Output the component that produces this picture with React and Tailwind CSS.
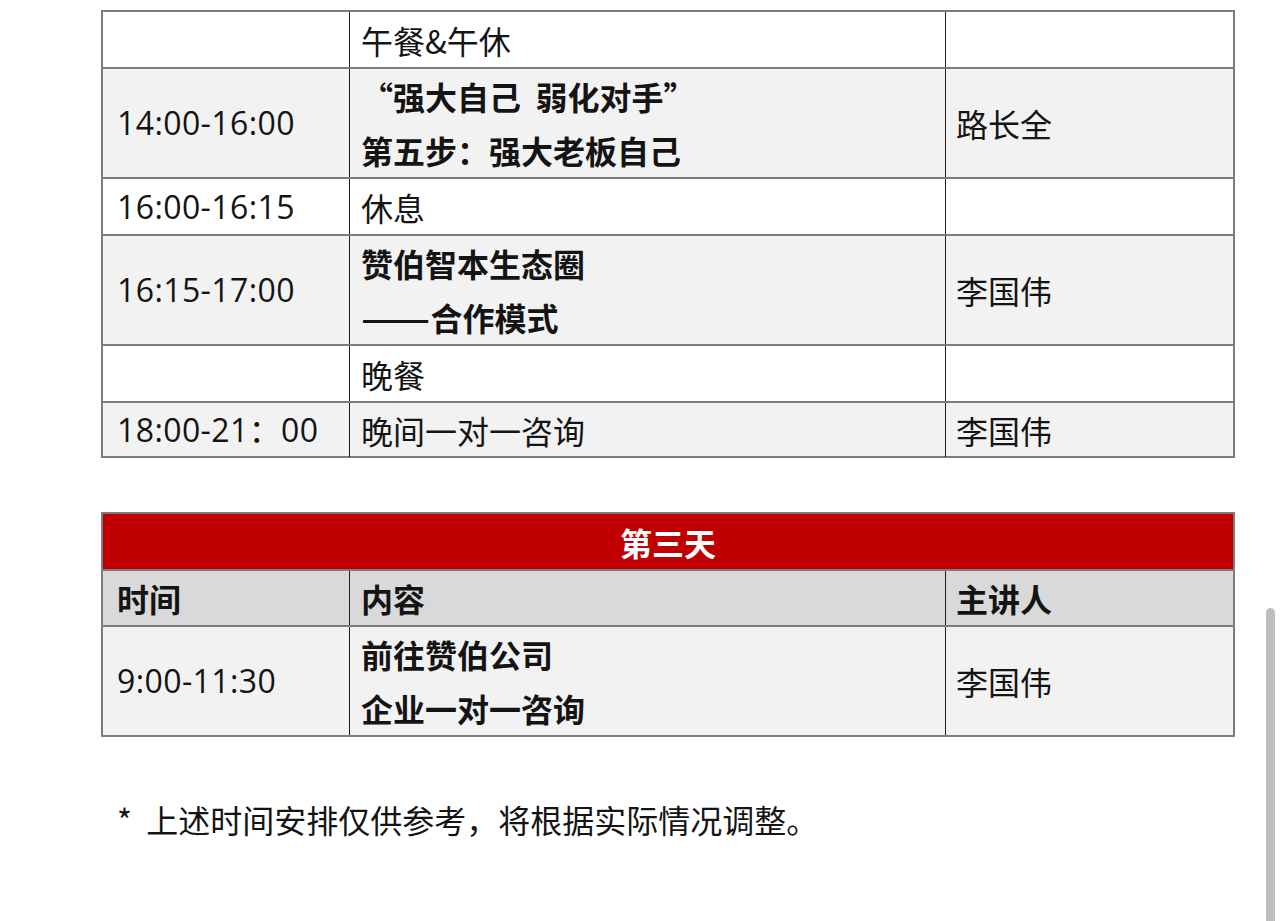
import React from "react";

const cjk = { fontFamily: '"Noto Sans CJK SC", "Noto Sans", sans-serif' };
const latin = { fontFamily: '"Open Sans", "Noto Sans CJK SC", sans-serif' };

function Row({ bg, time, content, speaker, bold, h, first }) {
  return (
    <div className={`grid grid-cols-[247px_596px_1fr] ${first ? "" : "border-t-2 border-[#7d7d7d]"} ${bg} ${h}`}>
      <div className="flex items-center pl-[14px] border-r border-[#1e1e1e] tracking-[0.4px]" style={latin}>
        {time}
      </div>
      <div className={`flex flex-col justify-center pl-[11px] border-r border-[#1e1e1e] ${bold ? "font-bold" : ""}`}>
        {content.map((c, i) => (
          <div key={i} className="leading-[54px] whitespace-pre">
            {c}
          </div>
        ))}
      </div>
      <div className="flex items-center pl-[10px]">{speaker}</div>
    </div>
  );
}

const dash = (
  <>
    <span className="inline-block origin-left scale-x-[1.27] mr-[15px]">——</span>合作模式
  </>
);

export default function App() {
  return (
    <div className="relative w-[1284px] h-[921px] bg-white overflow-hidden text-[32px] text-[#141414]" style={cjk}>
      <div className="pt-[10px] pl-[101px]">
        <div className="w-[1134px] border-2 border-[#7d7d7d]">
          <Row first h="h-[55px]" bg="bg-white" time="" content={["午餐&午休"]} speaker="" />
          <Row h="h-[110px]" bg="bg-[#f2f2f2]" time="14:00-16:00" content={["“强大自己  弱化对手”", "第五步：强大老板自己"]} speaker="路长全" bold />
          <Row h="h-[57px]" bg="bg-white" time="16:00-16:15" content={["休息"]} speaker="" />
          <Row h="h-[110px]" bg="bg-[#f2f2f2]" time="16:15-17:00" content={["赞伯智本生态圈", dash]} speaker="李国伟" bold />
          <Row h="h-[57px]" bg="bg-white" time="" content={["晚餐"]} speaker="" />
          <Row h="h-[55px]" bg="bg-[#f2f2f2]" time="18:00-21：00" content={["晚间一对一咨询"]} speaker="李国伟" />
        </div>

        <div className="mt-[54px] w-[1134px] border-2 border-[#7d7d7d]">
          <div className="h-[55px] bg-[#c00000] text-white font-bold flex items-center justify-center">第三天</div>
          <div className="grid grid-cols-[247px_596px_1fr] h-[56px] border-t-2 border-[#7d7d7d] bg-[#d9d9d9] font-bold">
            <div className="flex items-center pl-[14px] border-r border-[#1e1e1e]">时间</div>
            <div className="flex items-center pl-[11px] border-r border-[#1e1e1e]">内容</div>
            <div className="flex items-center pl-[10px]">主讲人</div>
          </div>
          <Row h="h-[110px]" bg="bg-[#f2f2f2]" time="9:00-11:30" content={["前往赞伯公司", "企业一对一咨询"]} speaker="李国伟" bold />
        </div>

        <div className="mt-[60px] pl-[16px] leading-[44px] whitespace-pre">*  上述时间安排仅供参考，将根据实际情况调整。</div>
      </div>

      <div className="absolute left-[1266px] top-[608px] w-[9px] h-[330px] rounded-full bg-[#bfbfbf]" />
    </div>
  );
}
